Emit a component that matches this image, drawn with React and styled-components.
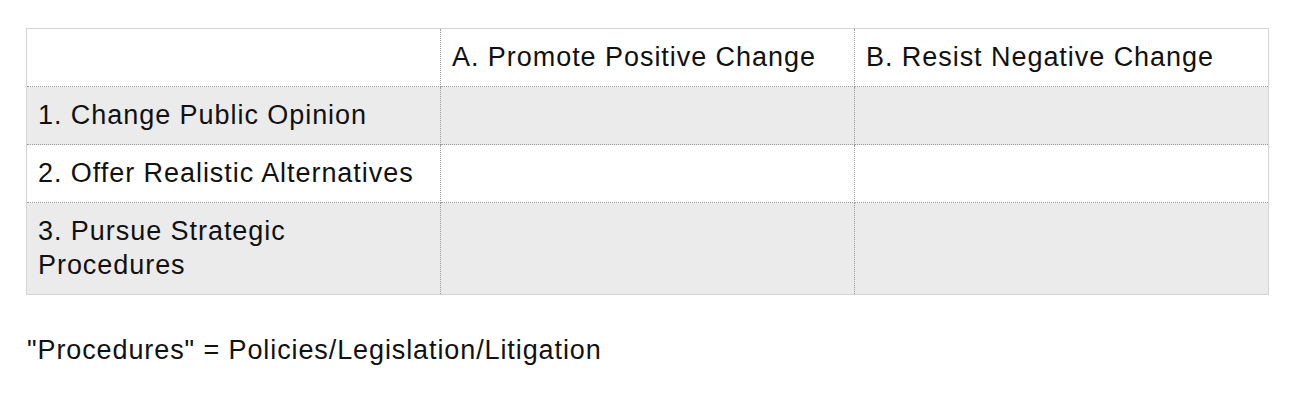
import React from 'react'
import styled, { createGlobalStyle } from 'styled-components'

const GlobalStyle = createGlobalStyle`
  body {
    margin: 0;
    background: #ffffff;
    font-family: "Liberation Sans", Arial, Helvetica, sans-serif;
    color: #111111;
  }
`

const columns = ['', 'A. Promote Positive Change', 'B. Resist Negative Change']

const rows = [
  { label: '1. Change Public Opinion', shaded: true },
  { label: '2. Offer Realistic Alternatives', shaded: false },
  { label: <>3. Pursue Strategic<br />Procedures</>, shaded: true }
]

export default function App () {
  return (
    <Page>
      <GlobalStyle />
      <Grid>
        <thead>
          <Row>
            {columns.map((c, i) => <Cell key={i}>{c}</Cell>)}
          </Row>
        </thead>
        <tbody>
          {rows.map((r, i) => (
            <Row key={i} shaded={r.shaded}>
              <Cell>{r.label}</Cell>
              <Cell />
              <Cell />
            </Row>
          ))}
        </tbody>
      </Grid>
      <Note>"Procedures" = Policies/Legislation/Litigation</Note>
    </Page>
  )
}

const Page = styled.div`
  padding: 28px 0 0 26px;
`

const Grid = styled.table`
  width: 1243px;
  table-layout: fixed;
  border-collapse: collapse;
  border: 1px solid #d4d4d4;
`

const Row = styled.tr.withConfig({ shouldForwardProp: p => p !== 'shaded' })`
  background: ${p => (p.shaded ? '#ebebeb' : '#ffffff')};
`

const Cell = styled.td`
  border: 1px dotted #9a9a9a;
  padding: 11px 11px 12px;
  font-size: 27px;
  line-height: 34px;
  letter-spacing: 0.95px;
  vertical-align: top;
  text-align: left;
  font-weight: normal;
  white-space: nowrap;
`

const Note = styled.p`
  margin: 38px 0 0 1px;
  font-size: 27px;
  line-height: 34px;
  letter-spacing: 0.9px;
`
